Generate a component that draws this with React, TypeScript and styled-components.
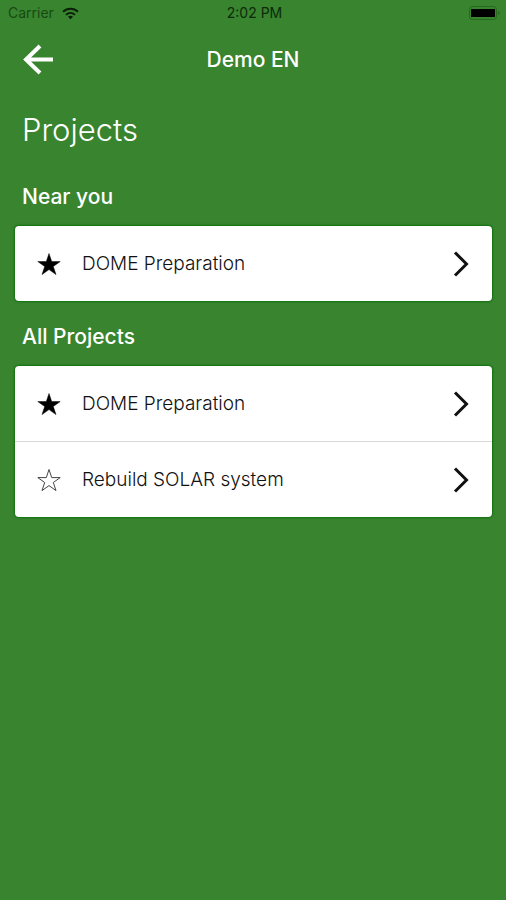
import React from "react";
import styled, { createGlobalStyle } from "styled-components";

const GlobalStyle = createGlobalStyle`
  *, *::before, *::after { box-sizing: border-box; }
  body {
    margin: 0;
    background: #38842f;
    font-family: Inter, "Liberation Sans", sans-serif;
    color: #fff;
  }
`;

const Screen = styled.div`
  min-height: 100vh;
  background: #38842f;
`;

const StatusBar = styled.div`
  display: grid;
  grid-template-columns: 1fr auto 1fr;
  align-items: center;
  height: 26px;
  padding: 0 5px 0 8px;
  font-size: 14px;
  line-height: 16px;
  color: #0c2b0a;
`;

const Carrier = styled.div`
  display: flex;
  align-items: center;
  gap: 8px;
  color: #174a12;
`;

const Clock = styled.time`
  font-weight: 400;
`;

const BatteryIcon = styled.svg`
  justify-self: end;
`;

const NavBar = styled.header`
  display: grid;
  grid-template-columns: 48px 1fr 48px;
  align-items: center;
  height: 68px;
  padding: 0 15px;
`;

const BackButton = styled.button`
  display: flex;
  align-items: center;
  justify-content: center;
  height: 48px;
  padding: 0;
  border: 0;
  background: none;
  color: #fff;
  cursor: pointer;
`;

const NavTitle = styled.div`
  font-size: 21px;
  font-weight: 500;
  line-height: 28px;
  text-align: center;
`;

const Content = styled.main`
  padding: 14px 14px 24px 15px;
`;

const PageTitle = styled.h1`
  margin: 0 0 31px;
  padding: 0 7px;
  font-size: 31px;
  font-weight: 300;
  line-height: 44px;
`;

const Section = styled.section`
  margin-bottom: 22px;
`;

const SectionTitle = styled.h2`
  margin: 0 0 15px;
  padding: 0 7px;
  font-size: 21px;
  font-weight: 500;
  line-height: 28px;
`;

const Card = styled.ul`
  margin: 0;
  padding: 0;
  list-style: none;
  overflow: hidden;
  border-radius: 4px;
  background: #fff;
  box-shadow: 0 0 2px 1px #10700c;
`;

const CardItem = styled.li`
  & + & {
    border-top: 1px solid #d8d8d8;
  }
`;

const ProjectButton = styled.button`
  display: grid;
  grid-template-columns: 24px 1fr 16px;
  column-gap: 21px;
  align-items: center;
  width: 100%;
  height: 75px;
  padding: 0 23px 0 22px;
  border: 0;
  background: none;
  color: #111;
  font-family: inherit;
  font-size: 19px;
  font-weight: 300;
  line-height: 26px;
  text-align: left;
  cursor: pointer;
`;

const WifiIcon = () => (
  <svg width="17" height="13" viewBox="0 0 17 13" fill="none" stroke="#0a1f08" strokeWidth="2" aria-hidden="true">
    <path d="M1 4.8C5.2.7 11.8.7 16 4.8" />
    <path d="M4 7.9c2.6-2.5 6.4-2.5 9 0" />
    <path d="M8.5 12.2 6 9.8c1.4-1.3 3.6-1.3 5 0Z" fill="#0a1f08" stroke="none" />
  </svg>
);

const ArrowIcon = () => (
  <svg width="32" height="32" viewBox="0 0 32 32" fill="none" stroke="currentColor" strokeWidth="4" aria-hidden="true">
    <path d="M17 2 3 15.500 17 29M3 15.500H30" />
  </svg>
);

const StarIcon = ({ filled }: { filled: boolean }) => (
  <svg width="24" height="24" viewBox="0 0 24 24" aria-hidden="true">
    <path
      d="M12 1.500 14.700 9.600H23.200L16.300 14.500 19 22.600 12 17.600 5 22.600 7.700 14.500.800 9.600H9.300Z"
      fill={filled ? "#000" : "none"}
      stroke={filled ? "#000" : "#444"}
      strokeWidth={filled ? "0.500" : "1"}
    />
  </svg>
);

const ChevronIcon = () => (
  <svg width="16" height="26" viewBox="0 0 16 26" fill="none" stroke="#111" strokeWidth="3" aria-hidden="true">
    <path d="M2 1.500 13.500 13 2 24.500" />
  </svg>
);

type Project = { name: string; starred: boolean };

const sections: { title: string; projects: Project[] }[] = [
  { title: "Near you", projects: [{ name: "DOME Preparation", starred: true }] },
  {
    title: "All Projects",
    projects: [
      { name: "DOME Preparation", starred: true },
      { name: "Rebuild SOLAR system", starred: false },
    ],
  },
];

export default function App() {
  return (
    <Screen>
      <GlobalStyle />
      <StatusBar>
        <Carrier>
          <span>Carrier</span>
          <WifiIcon />
        </Carrier>
        <Clock>2:02 PM</Clock>
        <BatteryIcon width="32" height="14" viewBox="0 0 32 14" aria-hidden="true">
          <rect x="0.500" y="0.500" width="27" height="13" rx="3" fill="none" stroke="#266a1e" />
          <rect x="2" y="3" width="24" height="8" fill="#000" />
          <path d="M29 5c2 .500 2 3.500 0 4Z" fill="#266a1e" />
        </BatteryIcon>
      </StatusBar>
      <NavBar>
        <BackButton type="button" aria-label="Back">
          <ArrowIcon />
        </BackButton>
        <NavTitle>Demo EN</NavTitle>
      </NavBar>
      <Content>
        <PageTitle>Projects</PageTitle>
        {sections.map((section) => (
          <Section key={section.title}>
            <SectionTitle>{section.title}</SectionTitle>
            <Card>
              {section.projects.map((project) => (
                <CardItem key={project.name}>
                  <ProjectButton type="button">
                    <StarIcon filled={project.starred} />
                    <span>{project.name}</span>
                    <ChevronIcon />
                  </ProjectButton>
                </CardItem>
              ))}
            </Card>
          </Section>
        ))}
      </Content>
    </Screen>
  );
}
